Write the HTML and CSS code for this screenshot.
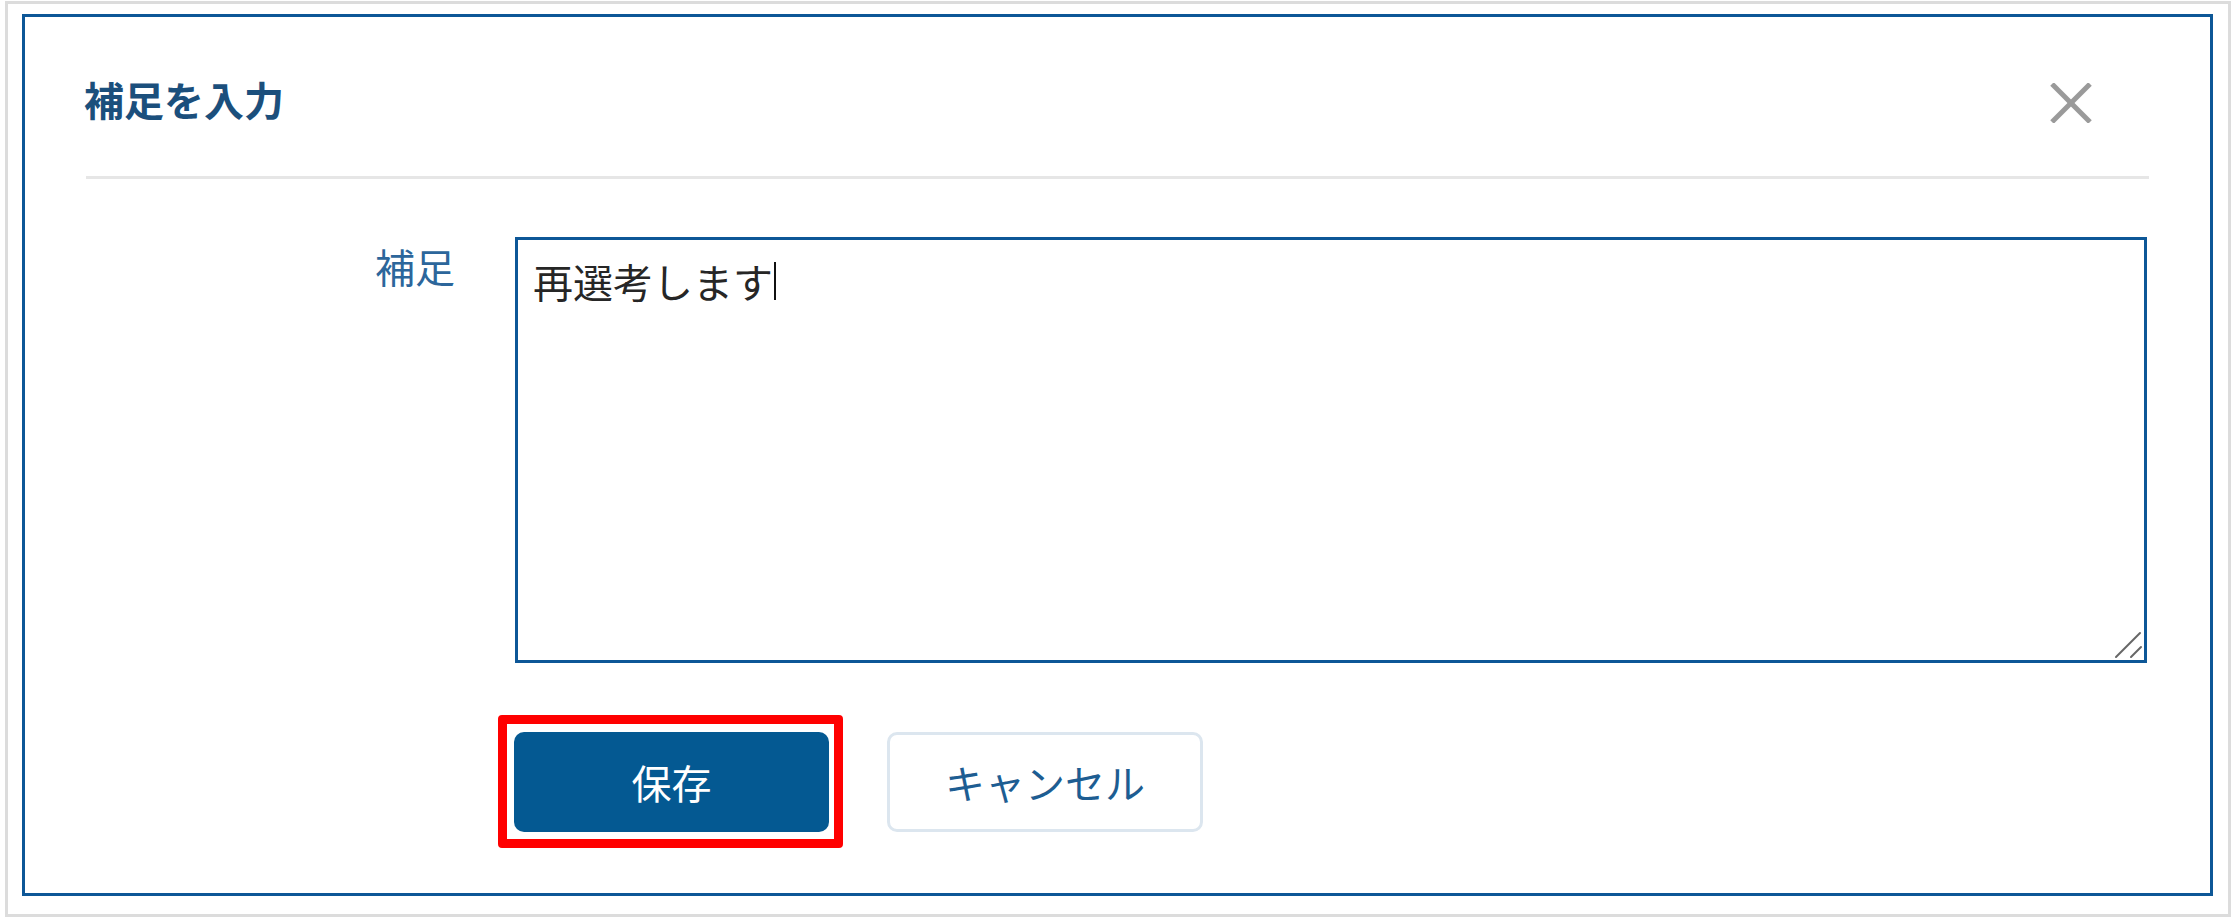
FILE: index.html
```html
<!DOCTYPE html>
<html lang="ja">
<head>
<meta charset="utf-8">
<title>補足を入力</title>
<link rel="stylesheet" href="styles.css">
</head>
<body>
<div class="page">
  <div class="dialog">
    <div class="dialog-header">
      <h2 class="dialog-title">補足を入力</h2>
      <button class="close-btn" type="button" aria-label="閉じる">
        <svg width="42" height="40" viewBox="0 0 42 40" aria-hidden="true">
          <line x1="2" y1="1" x2="40" y2="39" stroke="#9a9a9a" stroke-width="5"/>
          <line x1="40" y1="1" x2="2" y2="39" stroke="#9a9a9a" stroke-width="5"/>
        </svg>
      </button>
    </div>
    <div class="divider"></div>
    <div class="form">
      <label class="form-label">補足</label>
      <div class="textbox" role="textbox" aria-multiline="true">再選考します<span class="caret"></span>
        <svg class="grip" width="30" height="30" viewBox="0 0 30 30" aria-hidden="true">
          <line x1="2" y1="27" x2="26" y2="3" stroke="#666" stroke-width="2" stroke-linecap="round"/>
          <line x1="17" y1="27" x2="27" y2="17" stroke="#666" stroke-width="2" stroke-linecap="round"/>
        </svg>
      </div>
      <div class="actions">
        <span class="highlight"><button class="btn btn-primary" type="button">保存</button></span>
        <button class="btn btn-secondary" type="button">キャンセル</button>
      </div>
    </div>
  </div>
</div>
</body>
</html>
```
FILE: styles.css
```css
* { box-sizing: border-box; }
html, body {
  margin: 0;
  padding: 0;
  background: #ffffff;
  font-family: "Noto Sans CJK JP", "Noto Sans", sans-serif;
}
body {
  padding: 1px 0 0 5px;
}
.page {
  width: 2226px;
  height: 916px;
  border: 3px solid #dcdcdc;
  padding: 10px 15px 18px 14px;
  display: flex;
  flex-direction: column;
}
.dialog {
  flex: 1;
  border: 3px solid #0d5797;
  display: flex;
  flex-direction: column;
}
.dialog-header {
  display: flex;
  justify-content: space-between;
  align-items: flex-start;
  padding: 62px 118px 0 59px;
}
.dialog-title {
  margin: 0;
  font-size: 40px;
  line-height: 40px;
  font-weight: 700;
  color: #1b4f7c;
}
.close-btn {
  margin-top: 4px;
  padding: 0;
  border: 0;
  background: transparent;
  width: 42px;
  height: 40px;
  display: block;
}
.close-btn svg { display: block; }
.divider {
  height: 3px;
  background: #e6e6e6;
  margin: 53px 61px 0 61px;
}
.form {
  display: grid;
  grid-template-columns: 430px 1fr;
  column-gap: 60px;
  row-gap: 52px;
  padding: 58px 63px 0 0;
}
.form-label {
  text-align: right;
  font-size: 40px;
  line-height: 40px;
  padding-top: 9px;
  color: #2c669b;
}
.textbox {
  position: relative;
  height: 426px;
  border: 3px solid #0d5797;
  padding: 21px 15px;
  font-size: 40px;
  line-height: 40px;
  color: #262626;
  background: #fff;
}
.caret {
  display: inline-block;
  width: 2px;
  height: 38px;
  margin-left: 1px;
  margin-top: 1px;
  vertical-align: top;
  background: #111;
}
.grip {
  position: absolute;
  right: 0;
  bottom: 0;
}
.actions {
  grid-column: 2;
  display: flex;
  align-items: center;
  gap: 44px;
  margin-left: -17px;
}
.highlight {
  display: inline-block;
  border: 9px solid #ff0000;
  border-radius: 4px;
  padding: 8px 5px 7px 7px;
}
.btn {
  font-family: "Noto Sans CJK JP", "Noto Sans", sans-serif;
  font-size: 40px;
  line-height: 40px;
  height: 100px;
  border-radius: 10px;
  display: block;
}
.btn-primary {
  width: 315px;
  border: 0;
  background: #045992;
  color: #ffffff;
}
.btn-secondary {
  width: 316px;
  border: 3px solid #dce6ef;
  background: #ffffff;
  color: #1d5d92;
}
```
